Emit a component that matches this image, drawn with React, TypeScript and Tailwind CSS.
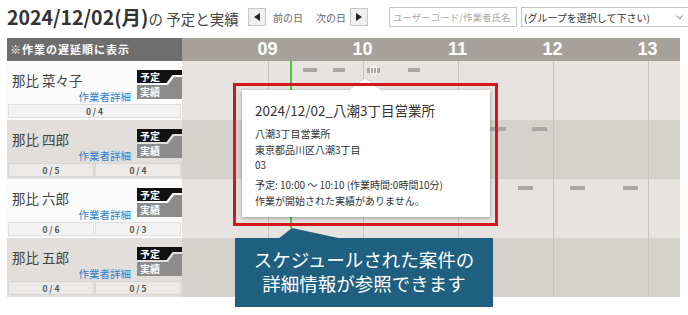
import React from 'react';

type Dash = { left: number; width: number; icon?: boolean };

interface Row {
  name: string;
  counts: string[];
  alt: boolean;
  dashes: Dash[];
}

const rows: Row[] = [
  {
    name: '那比 菜々子',
    counts: ['0 / 4'],
    alt: false,
    dashes: [
      { left: 121, width: 14 },
      { left: 151, width: 12 },
      { left: 185, width: 13, icon: true },
      { left: 226, width: 12 },
    ],
  },
  {
    name: '那比 四郎',
    counts: ['0 / 5', '0 / 4'],
    alt: true,
    dashes: [
      { left: 308, width: 16 },
      { left: 350, width: 15 },
    ],
  },
  {
    name: '那比 六郎',
    counts: ['0 / 6', '0 / 3'],
    alt: false,
    dashes: [
      { left: 336, width: 15 },
      { left: 388, width: 15 },
      { left: 441, width: 15 },
    ],
  },
  { name: '那比 五郎', counts: ['0 / 4', '0 / 5'], alt: true, dashes: [] },
];

const hours = ['09', '10', '11', '12', '13'];

function Badge() {
  return (
    <div className="relative w-[45px] h-[29px]">
      <svg className="absolute inset-0" width="45" height="29" viewBox="0 0 45 29">
        <polygon points="0,0 45,0 45,5 35.5,5 29.5,13 0,13" fill="#111" />
        <polygon points="0,15 31,15 37,7 45,7 45,29 0,29" fill="#8c8c8c" />
      </svg>
      <div className="relative flex flex-col pl-[3px] text-[10px] font-bold text-white">
        <span className="h-[13px] leading-[13px]">予定</span>
        <span className="mt-[2px] h-[14px] leading-[14px]">実績</span>
      </div>
    </div>
  );
}

function NameCell({ row }: { row: Row }) {
  return (
    <div className={`w-[175px] h-[59px] flex flex-col ${row.alt ? 'bg-[#e1dedb]' : 'bg-[#fbfbfb]'}`}>
      <div className="flex h-[43px]">
        <div className="flex-1 flex flex-col pl-[5px] pt-[9px]">
          <span className="text-[13.5px] leading-[20px] text-[#444]">{row.name}</span>
          <span className="self-end pr-[6px] text-[10.5px] leading-[14px] text-[#2d7fcf]">作業者詳細</span>
        </div>
        <div className="pt-[9px]">
          <Badge />
        </div>
      </div>
      <div className="flex h-[14px] gap-[1px] px-[1px]">
        {row.counts.map((c, i) => (
          <div
            key={i}
            className={`flex-1 flex items-center justify-center border text-[8.5px] font-bold text-[#555] ${
              row.alt ? 'bg-[#eceae8] border-[#d8d5d2]' : 'bg-[#f3f3f3] border-[#e0dfde]'
            }`}
          >
            {c}
          </div>
        ))}
      </div>
    </div>
  );
}

function TimelineRow({ row }: { row: Row }) {
  return (
    <div className={`relative h-[59px] flex ${row.alt ? 'bg-[#d5d1cd]' : 'bg-[#e6e3e0]'}`}>
      <div className="w-[86px] shrink-0" />
      {[0, 1, 2, 3].map((i) => (
        <div key={i} className="w-[95px] shrink-0 border-l border-[#c9c4bf]" />
      ))}
      <div className="flex-1 border-l border-[#c9c4bf]" />
      {row.dashes.map((d, i) =>
        d.icon ? (
          <svg
            key={i}
            className="absolute top-[5px]"
            style={{ left: d.left }}
            width={d.width}
            height="9"
            viewBox="0 0 13 9"
          >
            <rect x="0" y="2" width="13" height="5" fill="#a8a5a2" />
            <rect x="3.5" y="1" width="6" height="7" fill="none" stroke="#fff" strokeWidth="1" />
            <line x1="6.5" y1="0" x2="6.5" y2="9" stroke="#fff" strokeWidth="1" />
          </svg>
        ) : (
          <div
            key={i}
            className="absolute top-[7px] h-[4px] bg-[#a9a6a3]"
            style={{ left: d.left, width: d.width }}
          />
        )
      )}
    </div>
  );
}

export default function App() {
  return (
    <div className="relative w-[688px] h-[315px] overflow-hidden bg-white text-[#333] font-['Noto_Sans_CJK_JP','Liberation_Sans',sans-serif]">
      {/* top bar */}
      <div className="flex items-center h-[34px] pl-[7px] whitespace-nowrap">
        <div className="w-[241px] shrink-0 flex items-baseline">
          <span className="text-[19.5px] font-bold leading-none text-[#333]">2024/12/02(月)</span>
          <span className="text-[14.5px] leading-none text-[#444]">の 予定と実績</span>
        </div>
        <button className="w-[18px] h-[18px] shrink-0 flex items-center justify-center border border-[#c8c8c8] bg-[#efefef]">
          <span className="border-y-[4px] border-y-transparent border-r-[6px] border-r-[#222]" />
        </button>
        <span className="ml-[7px] text-[10px] text-[#666]">前の日</span>
        <span className="ml-[13px] text-[10px] text-[#666]">次の日</span>
        <button className="ml-[4px] w-[18px] h-[18px] shrink-0 flex items-center justify-center border border-[#c8c8c8] bg-[#efefef]">
          <span className="border-y-[4px] border-y-transparent border-l-[6px] border-l-[#222]" />
        </button>
        <div className="ml-[21px] w-[128px] h-[20px] shrink-0 flex items-center overflow-hidden border border-[#c6c6c6] pl-[3px] text-[9.5px] text-[#aaa]">
          ユーザーコード/作業者氏名
        </div>
        <div className="ml-[4px] w-[175px] h-[20px] shrink-0 flex items-center border border-[#c6c6c6] pl-[2px] text-[10px] text-[#333]">
          <span>(グループを選択して下さい)</span>
          <svg className="ml-[26px]" width="7" height="5" viewBox="0 0 7 5">
            <polyline points="0.5,0.5 3.5,4 6.5,0.5" fill="none" stroke="#777" strokeWidth="1" />
          </svg>
        </div>
      </div>

      {/* schedule table */}
      <div className="mt-[4px] ml-[7px] w-[673px]">
        <div className="flex h-[23px]">
          <div className="w-[175px] flex items-center pl-[3px] bg-[#6e6e6e] text-[11px] font-bold tracking-[1px] text-white">
            ※作業の遅延順に表示
          </div>
          <div className="flex-1 flex overflow-hidden bg-[#a7a19b]">
            <div className="w-[38px] shrink-0" />
            {hours.map((h) => (
              <div
                key={h}
                className="w-[95px] shrink-0 text-center text-[18px] font-bold leading-[23px] text-white font-['Liberation_Sans',sans-serif]"
              >
                {h}
              </div>
            ))}
          </div>
        </div>
        {rows.map((row) => (
          <div key={row.name} className="flex">
            <NameCell row={row} />
            <div className="flex-1">
              <TimelineRow row={row} />
            </div>
          </div>
        ))}
      </div>

      {/* current time line */}
      <div className="absolute left-[290px] top-[61px] w-[2px] h-[167px] bg-[#46c83a]" />

      {/* popup */}
      <div className="absolute left-[242px] top-[90px] w-[248px] h-[127px] bg-white shadow-[0_1px_4px_rgba(0,0,0,0.35)] pt-[11px] pl-[13px] text-[#333]">
        <div className="text-[13.5px] leading-[18px]">2024/12/02_八潮3丁目営業所</div>
        <div className="mt-[7px] text-[10px] leading-[15.5px]">
          <div>八潮3丁目営業所</div>
          <div>東京都品川区八潮3丁目</div>
          <div>03</div>
        </div>
        <div className="mt-[4.5px] text-[10px] leading-[15.5px]">
          <div>予定: 10:00 〜 10:10 (作業時間:0時間10分)</div>
          <div>作業が開始された実績がありません。</div>
        </div>
      </div>
      <svg className="absolute left-[348px] top-[77px]" width="34" height="14" viewBox="0 0 34 14">
        <polygon points="0,14 17,1 34,14" fill="#fff" />
        <polyline points="0,13.5 17,1 34,13.5" fill="none" stroke="#d6d6d6" strokeWidth="1" />
      </svg>

      {/* annotation frame */}
      <div className="absolute left-[233px] top-[83px] w-[265px] h-[143px] border-[3px] border-[#d3181b]" />

      {/* callout */}
      <svg className="absolute left-[277px] top-[227px]" width="68" height="12" viewBox="0 0 68 12">
        <polygon points="1,12 15,1 66,12" fill="#1f5f80" />
      </svg>
      <div className="absolute left-[235px] top-[238px] w-[258px] h-[69px] bg-[#1f5f80] pt-[8px] text-center text-[18.5px] leading-[26px] text-white">
        <div>スケジュールされた案件の</div>
        <div className="-mt-[2px]">詳細情報が参照できます</div>
      </div>
    </div>
  );
}
